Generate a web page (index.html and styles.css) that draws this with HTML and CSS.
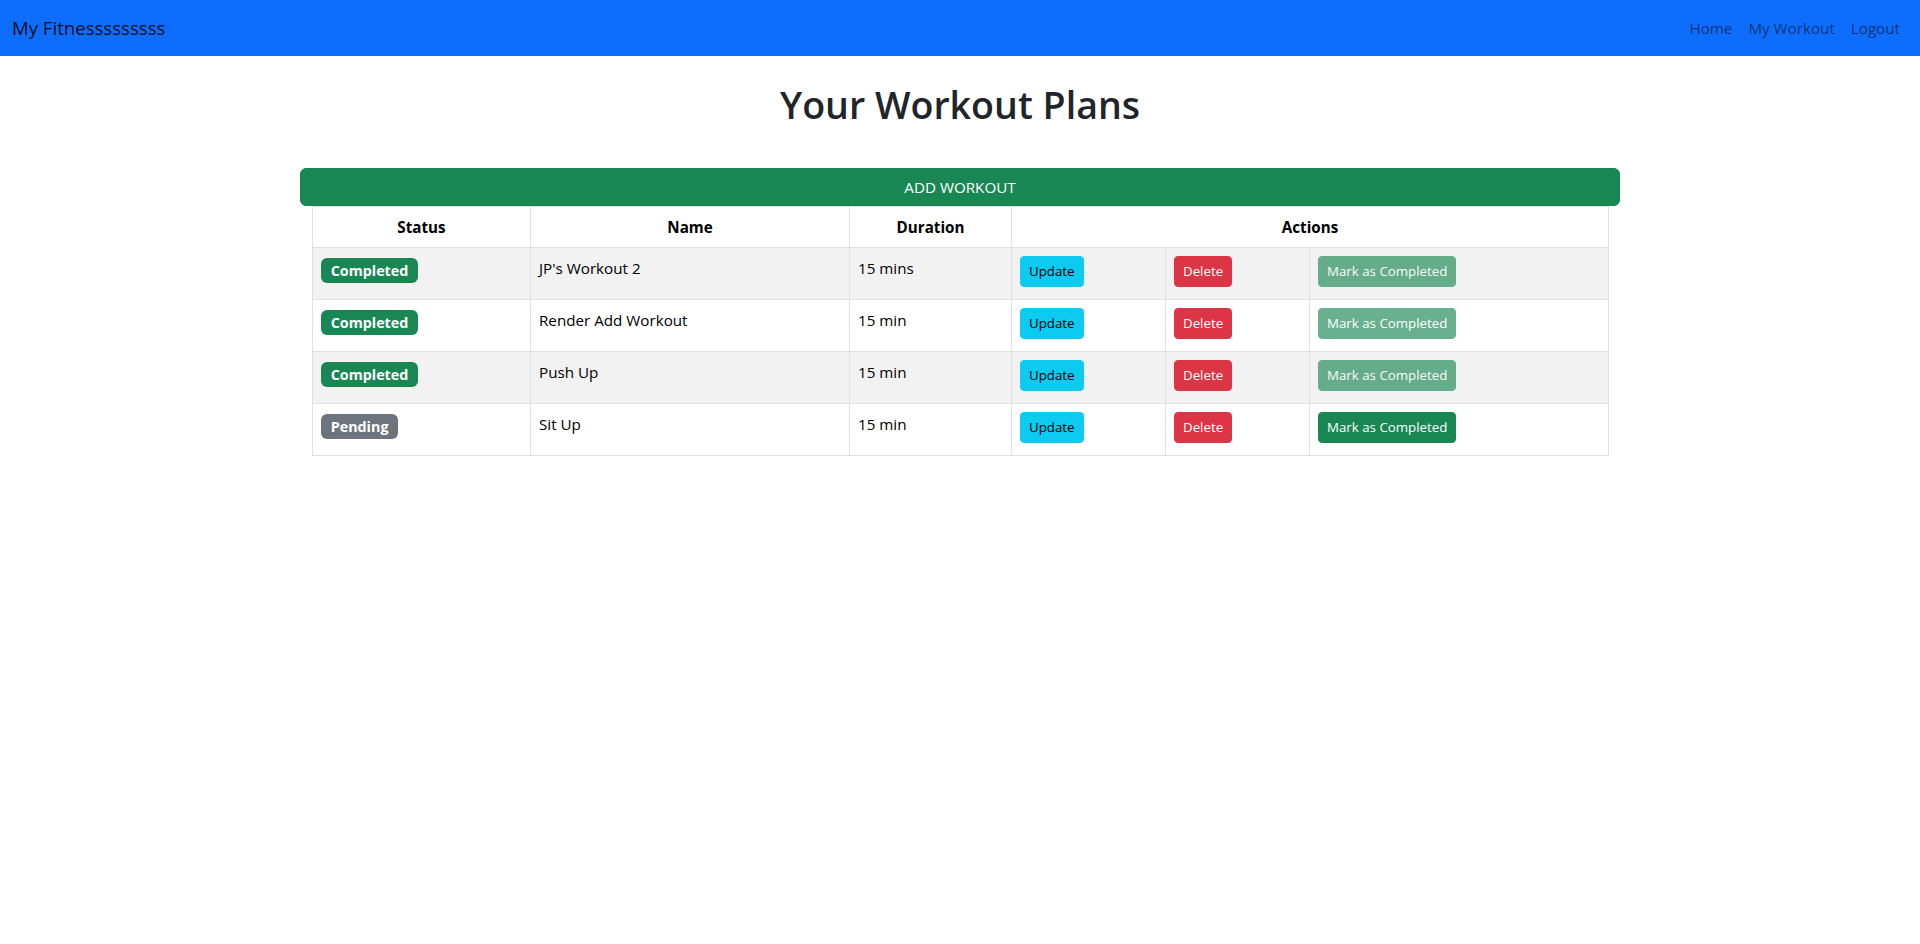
FILE: index.html
```html
<!DOCTYPE html>
<html lang="en">
<head>
<meta charset="utf-8">
<title>My Fitness</title>
<link rel="stylesheet" href="styles.css">
</head>
<body>
<nav class="navbar">
  <a class="brand" href="#">My Fitnesssssssss</a>
  <ul class="nav-links">
    <li><a href="#">Home</a></li>
    <li><a href="#">My Workout</a></li>
    <li><a href="#">Logout</a></li>
  </ul>
</nav>
<main class="page">
  <h1 class="title">Your Workout Plans</h1>
  <button class="btn-add" type="button">ADD WORKOUT</button>
  <div class="table-wrap">
    <table class="workouts">
      <colgroup>
        <col class="c-status"><col class="c-name"><col class="c-duration"><col class="c-update"><col class="c-delete"><col class="c-mark">
      </colgroup>
      <thead>
        <tr><th>Status</th><th>Name</th><th>Duration</th><th colspan="3">Actions</th></tr>
      </thead>
      <tbody>
        <tr class="odd">
          <td><div class="status"><span class="badge done">Completed</span></div></td>
          <td>JP's Workout 2</td>
          <td>15 mins</td>
          <td><button class="btn btn-info" type="button">Update</button></td>
          <td><button class="btn btn-danger" type="button">Delete</button></td>
          <td><button class="btn btn-success" type="button" disabled>Mark as Completed</button></td>
        </tr>
        <tr>
          <td><div class="status"><span class="badge done">Completed</span></div></td>
          <td>Render Add Workout</td>
          <td>15 min</td>
          <td><button class="btn btn-info" type="button">Update</button></td>
          <td><button class="btn btn-danger" type="button">Delete</button></td>
          <td><button class="btn btn-success" type="button" disabled>Mark as Completed</button></td>
        </tr>
        <tr class="odd">
          <td><div class="status"><span class="badge done">Completed</span></div></td>
          <td>Push Up</td>
          <td>15 min</td>
          <td><button class="btn btn-info" type="button">Update</button></td>
          <td><button class="btn btn-danger" type="button">Delete</button></td>
          <td><button class="btn btn-success" type="button" disabled>Mark as Completed</button></td>
        </tr>
        <tr>
          <td><div class="status"><span class="badge pending">Pending</span></div></td>
          <td>Sit Up</td>
          <td>15 min</td>
          <td><button class="btn btn-info" type="button">Update</button></td>
          <td><button class="btn btn-danger" type="button">Delete</button></td>
          <td><button class="btn btn-success" type="button">Mark as Completed</button></td>
        </tr>
      </tbody>
    </table>
  </div>
</main>
</body>
</html>
```

FILE: styles.css
```css
* { box-sizing: border-box; }

html, body {
  margin: 0;
  padding: 0;
}

body {
  font-family: "Open Sans", "Noto Sans", "Liberation Sans", sans-serif;
  font-size: 15.2px;
  line-height: 24px;
  color: #212529;
  background: #fff;
}

.navbar {
  height: 56px;
  background: #0d6efd;
  padding: 8px 12px;
  display: flex;
  align-items: center;
  justify-content: space-between;
}

.brand {
  font-size: 18.6px;
  line-height: 30px;
  padding: 5px 0;
  color: rgba(0, 0, 0, 0.9);
  text-decoration: none;
}

.nav-links {
  list-style: none;
  margin: 0;
  padding: 0;
  display: flex;
}

.nav-links a {
  display: block;
  padding: 8px;
  line-height: 24px;
  color: rgba(0, 0, 0, 0.55);
  text-decoration: none;
}

.page {
  width: 1320px;
  margin: 0 auto;
  display: flex;
  flex-direction: column;
}

.title {
  margin: 25px 0 39px;
  text-align: center;
  font-size: 37.6px;
  line-height: 48px;
  font-weight: 600;
  color: #212529;
}

.btn-add {
  width: 100%;
  height: 38px;
  padding: 6px 12px;
  border: 1px solid #198754;
  border-radius: 6px;
  background: #198754;
  color: #fff;
  font-family: inherit;
  font-size: 15.2px;
  line-height: 24px;
  cursor: pointer;
}

.table-wrap {
  padding: 0 12px;
}

.workouts {
  width: 1296px;
  table-layout: fixed;
  border-collapse: collapse;
  color: #000;
}

.c-status { width: 218px; }
.c-name { width: 319px; }
.c-duration { width: 162px; }
.c-update { width: 154px; }
.c-delete { width: 144px; }
.c-mark { width: 299px; }

.workouts th,
.workouts td {
  border: 1px solid #dee2e6;
  padding: 8px;
  text-align: left;
  vertical-align: top;
  line-height: 24px;
}

.workouts th {
  text-align: center;
  font-weight: 700;
}

.workouts tbody tr.odd td {
  background: #f2f2f2;
}

.status {
  height: 27px;
  margin-bottom: 8px;
  padding-top: 2px;
}

.badge {
  display: inline-block;
  padding: 5px 9.75px;
  font-size: 14.3px;
  font-weight: 700;
  line-height: 15px;
  color: #fff;
  border-radius: 6px;
  white-space: nowrap;
}

.badge.done { background: #198754; }
.badge.pending { background: #6c757d; }

.btn {
  display: inline-block;
  height: 31px;
  padding: 4px 8px;
  border: 1px solid transparent;
  border-radius: 4px;
  font-family: inherit;
  font-size: 13.3px;
  line-height: 21px;
  cursor: pointer;
  white-space: nowrap;
}

.btn-info {
  background: #0dcaf0;
  border-color: #0dcaf0;
  color: #000;
}

.btn-danger {
  background: #dc3545;
  border-color: #dc3545;
  color: #fff;
}

.btn-success {
  background: #198754;
  border-color: #198754;
  color: #fff;
}

.btn:disabled {
  opacity: 0.65;
  cursor: default;
}
```
